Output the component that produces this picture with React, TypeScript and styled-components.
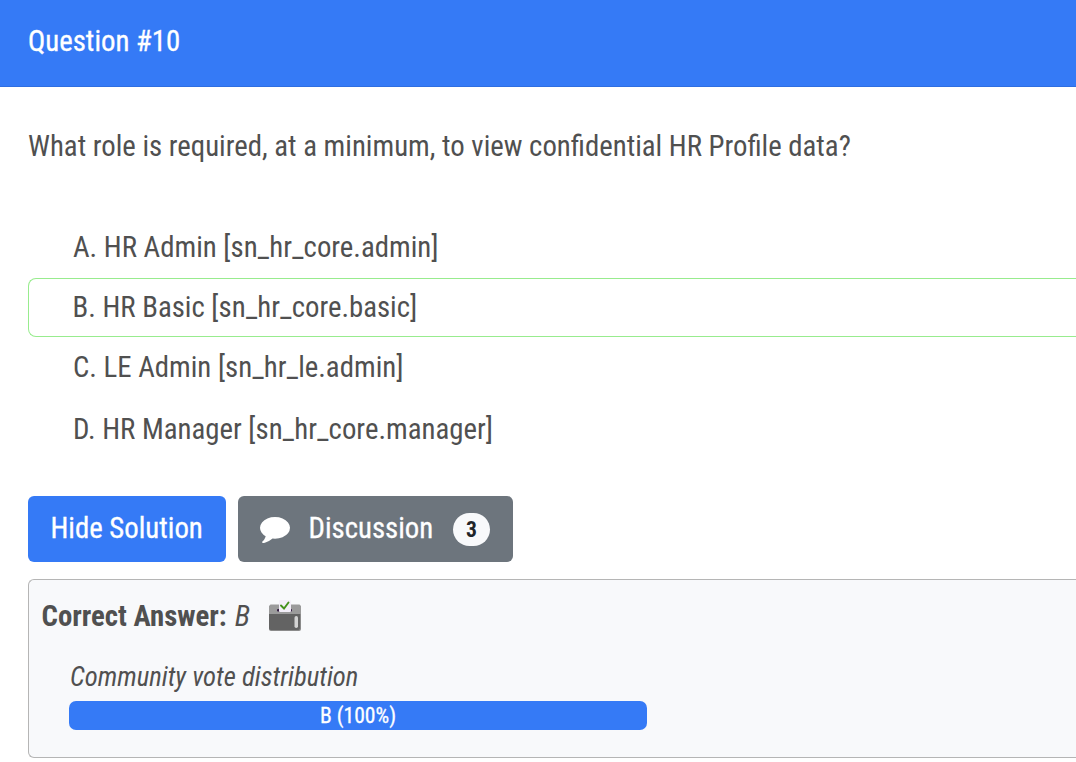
import React from 'react';
import styled, { createGlobalStyle } from 'styled-components';

const GlobalStyle = createGlobalStyle`
  *, *::before, *::after { box-sizing: border-box; }
  body {
    margin: 0;
    background: #fff;
    color: #505050;
    font: 400 28.8px/43px "Roboto Condensed", Roboto, sans-serif;
    overflow: hidden;
  }
`;

const Card = styled.article`
  height: 762px;
  overflow: hidden;
`;

const Header = styled.header`
  height: 87px;
  padding: 20px 28px 0;
  background: #357af6;
  border-bottom: 1px solid #2f6ee0;
  color: #fff;
  -webkit-text-stroke: 0.3px #fff;
`;

const Body = styled.div`
  padding: 38px 0 0 28px;
`;

const Question = styled.p`
  margin: 0 0 49px;
`;

const Choices = styled.ul`
  list-style: none;
  margin: 0;
  padding: 0;
`;

const Choice = styled.li<{ $correct?: boolean; $height: number }>`
  display: flex;
  align-items: center;
  height: ${(p) => p.$height}px;
  padding-left: ${(p) => (p.$correct ? 43.5 : 44)}px;
  border: 1px solid ${(p) => (p.$correct ? '#98ec8e' : 'transparent')};
  border-right: 0;
  border-radius: 8px 0 0 8px;
`;

const Actions = styled.div`
  display: flex;
  gap: 12px;
  margin: 36px 0 17px;
`;

const Button = styled.button<{ $secondary?: boolean }>`
  display: flex;
  align-items: center;
  height: 66px;
  width: ${(p) => (p.$secondary ? 275 : 198)}px;
  padding: 0 22.5px 2px;
  ${(p) => p.$secondary && 'padding: 0 23px 2px 21.5px;'}
  border: 0;
  border-radius: 6px;
  background: ${(p) => (p.$secondary ? '#6d757d' : '#357af6')};
  color: #fff;
  font: inherit;
  white-space: nowrap;
  -webkit-text-stroke: 0.3px #fff;
`;

const CommentIcon = styled.svg`
  width: 30px;
  height: 26px;
  margin: 3px 19px 0 0;
  flex: none;
`;

const Badge = styled.span`
  display: flex;
  align-items: center;
  justify-content: center;
  width: 37px;
  height: 33px;
  margin: 3px 0 0 auto;
  border-radius: 16.5px;
  background: #f8f9fb;
  color: #212529;
  font-size: 21.6px;
  font-weight: 700;
  line-height: 1;
  -webkit-text-stroke: 0;
`;

const Solution = styled.section`
  height: 179px;
  padding: 15px 0 0 12.5px;
  border: 1px solid #b5b5b5;
  border-right: 0;
  border-radius: 6px 0 0 6px;
  background: #f8f9fb;
`;

const Answer = styled.div`
  display: flex;
  align-items: center;
  height: 43px;
`;

const AnswerValue = styled.em`
  margin-left: 8px;
`;

const BallotIcon = styled.svg`
  width: 32px;
  height: 32px;
  margin: 0 0 2px 18.5px;
`;

const Votes = styled.div`
  width: 578px;
  margin: 20px 0 0 27.5px;
`;

const VotesTitle = styled.div`
  height: 43px;
  padding-left: 1px;
  font-size: 26.7px;
  font-style: italic;
  line-height: 39px;
`;

const VoteBar = styled.div`
  display: flex;
  align-items: center;
  justify-content: center;
  height: 29px;
  border-radius: 7px;
  background: #357af6;
  color: #fff;
  font-size: 21.6px;
  line-height: 1;
  -webkit-text-stroke: 0.3px #fff;
`;

const choices = [
  { text: 'A. HR Admin [sn_hr_core.admin]', height: 61 },
  { text: 'B. HR Basic [sn_hr_core.basic]', height: 59, correct: true },
  { text: 'C. LE Admin [sn_hr_le.admin]', height: 61 },
  { text: 'D. HR Manager [sn_hr_core.manager]', height: 62 },
];

export default function App() {
  return (
    <>
      <GlobalStyle />
      <Card>
        <Header>Question #10</Header>
        <Body>
          <Question>What role is required, at a minimum, to view confidential HR Profile data?</Question>
          <Choices>
            {choices.map((c) => (
              <Choice key={c.text} $correct={c.correct} $height={c.height}>
                {c.text}
              </Choice>
            ))}
          </Choices>
          <Actions>
            <Button>Hide Solution</Button>
            <Button $secondary>
              <CommentIcon viewBox="0 128 1792 1536" preserveAspectRatio="none" fill="#fff">
                <path d="M1792 768q0 174-120 321.5t-326 233-450 85.5q-70 0-145-8-198 175-460 242-49 14-114 22h-5q-15 0-27-10.5t-16-27.5v-1q-3-4-.5-12t2-10 4.5-9.500l6-9 7-8.500 8-9q7-8 31-34.500t34.500-38 31-39.500 32.500-51 27-59 26-76q-157-89-247.500-220t-90.500-281q0-174 120-321.500t326-233 450-85.500 450 85.500 326 233 120 321.500z" />
              </CommentIcon>
              Discussion
              <Badge>3</Badge>
            </Button>
          </Actions>
          <Solution>
            <Answer>
              <strong>Correct Answer:</strong>
              <AnswerValue>B</AnswerValue>
              <BallotIcon viewBox="0 0 32 32">
                <path d="M1.500 4.500h29l1.500 1.500v10H0V6z" fill="#9b9b9b" />
                <path d="M0 14h32v15q0 2-2 2H2q-2 0-2-2z" fill="#8b8b8b" />
                <path d="M0 14h31v14q0 2-2 2H2q-2 0-2-2z" fill="#636363" />
                <rect x="8" y="9" width="15" height="2.500" rx="1" fill="#321b41" />
                <path d="M11 0h10q1 0 1 1v10q0 1-1 1H11q-1 0-1-1V1q0-1 1-1z" fill="#f3eef8" />
                <path d="M12 5.500l3 3 4.500-6" fill="none" stroke="#44911b" strokeWidth="1.9" strokeLinecap="round" />
                <rect x="25.500" y="16" width="3.500" height="12" rx="1.750" fill="#d3d3d3" />
              </BallotIcon>
            </Answer>
            <Votes>
              <VotesTitle>Community vote distribution</VotesTitle>
              <VoteBar>B (100%)</VoteBar>
            </Votes>
          </Solution>
        </Body>
      </Card>
    </>
  );
}
